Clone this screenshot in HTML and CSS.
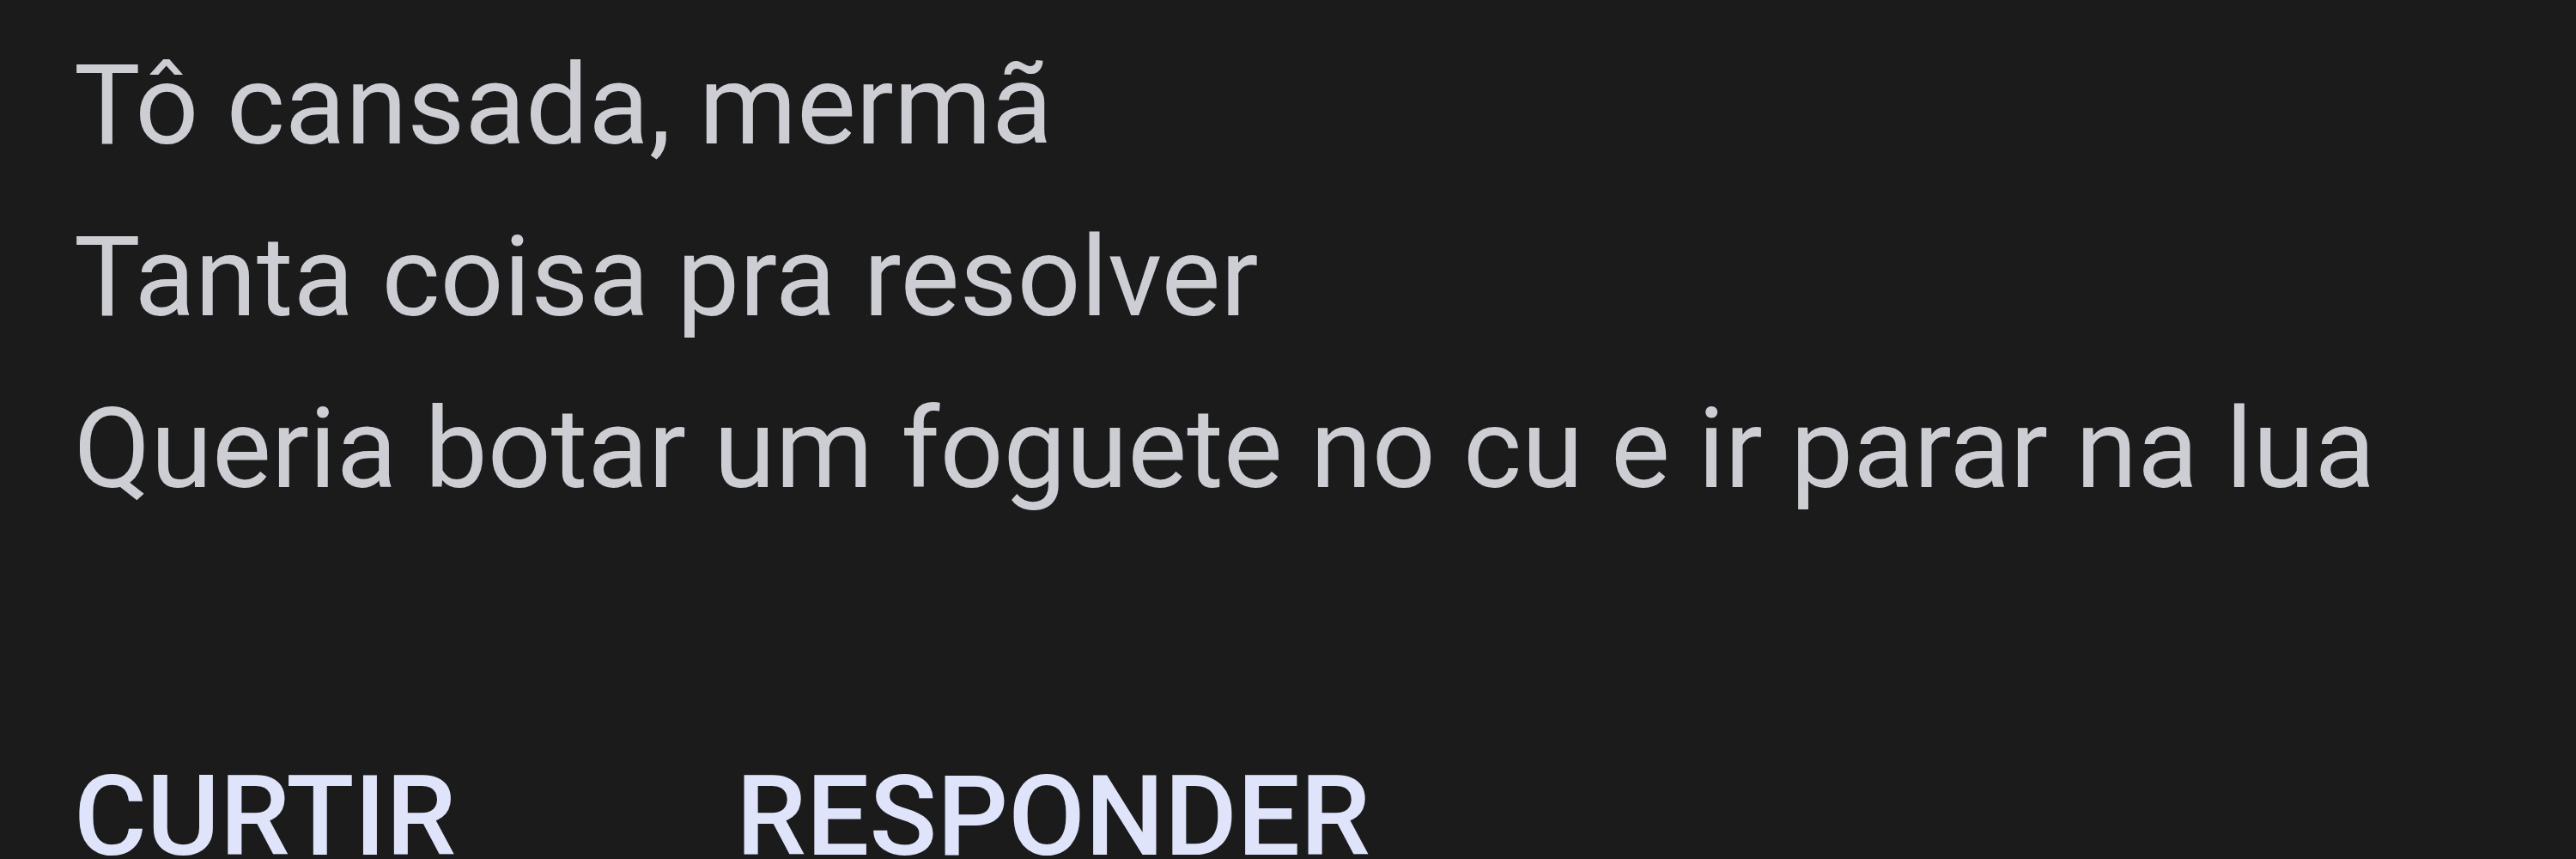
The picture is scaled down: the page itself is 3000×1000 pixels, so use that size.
FILE: index.html
```html
<!DOCTYPE html>
<html lang="pt-BR">
<head>
    <meta charset="UTF-8">
    <meta name="viewport" content="width=device-width, initial-scale=1.0">
    <title>Comentário</title>
    <link rel="stylesheet" href="styles.css">
</head>
<body>

<div class="comment">
    <div class="comment-text">
        <p>Tô cansada, mermã</p>
        <p>Tanta coisa pra resolver</p>
        <p>Queria botar um foguete no cu e ir parar na lua</p>
    </div>
    <div class="actions">
        <button class="action">CURTIR</button>
        <button class="action">RESPONDER</button>
    </div>
</div>

</body>
</html>
```

FILE: styles.css
```css
body {
    margin: 0;
    height: 100vh;
    overflow: hidden;
    background-color: #1b1b1c;
    font-family: 'Roboto', 'Liberation Sans', sans-serif;
}
.comment {
    padding: 23px 0 0 86px;
}
.comment-text p {
    margin: 0;
    font-size: 130px;
    line-height: 200px;
    color: #cdced3;
}
.actions {
    display: flex;
    gap: 326px;
    margin-top: 253px;
}
.action {
    padding: 0;
    background: none;
    border: none;
    font-family: inherit;
    font-size: 130px;
    font-weight: 500;
    line-height: 150px;
    color: #dfe4fa;
    cursor: pointer;
}
```
